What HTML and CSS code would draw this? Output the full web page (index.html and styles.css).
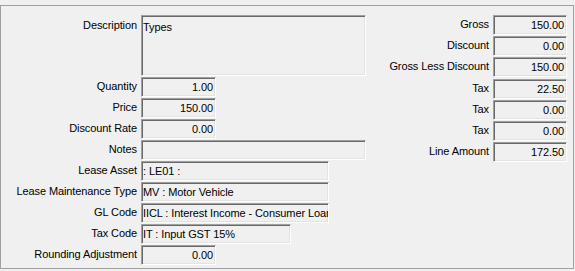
FILE: index.html
```html
<!DOCTYPE html>
<html lang="en">
<head>
    <meta charset="UTF-8">
    <title>Line Details</title>
    <link rel="stylesheet" href="styles.css">
</head>
<body>
    <div class="group">
        <div class="form left-form">
            <span class="lbl lbl-memo">Description</span>
            <div class="fld memo">Types</div>

            <span class="lbl">Quantity</span>
            <div class="fld num">1.00</div>

            <span class="lbl">Price</span>
            <div class="fld num">150.00</div>

            <span class="lbl">Discount Rate</span>
            <div class="fld num">0.00</div>

            <span class="lbl">Notes</span>
            <div class="fld wide"></div>

            <span class="lbl">Lease Asset</span>
            <div class="fld mid">: LE01 :</div>

            <span class="lbl">Lease Maintenance Type</span>
            <div class="fld mid">MV : Motor Vehicle</div>

            <span class="lbl">GL Code</span>
            <div class="fld mid">IICL : Interest Income - Consumer Loan</div>

            <span class="lbl">Tax Code</span>
            <div class="fld short">IT : Input GST 15%</div>

            <span class="lbl">Rounding Adjustment</span>
            <div class="fld num">0.00</div>
        </div>

        <div class="form right-form">
            <span class="lbl">Gross</span>
            <div class="fld num">150.00</div>

            <span class="lbl">Discount</span>
            <div class="fld num">0.00</div>

            <span class="lbl">Gross Less Discount</span>
            <div class="fld num">150.00</div>

            <span class="lbl">Tax</span>
            <div class="fld num">22.50</div>

            <span class="lbl">Tax</span>
            <div class="fld num">0.00</div>

            <span class="lbl">Tax</span>
            <div class="fld num">0.00</div>

            <span class="lbl">Line Amount</span>
            <div class="fld num">172.50</div>
        </div>
    </div>
</body>
</html>
```

FILE: styles.css
```css
body {
    margin: 0;
    background-color: #f0f0f0;
    font-family: "Liberation Sans", Arial, sans-serif;
    font-size: 11px;
    letter-spacing: -0.1px;
    color: #000;
}

/* group box frame */
.group {
    margin-top: 5px;
    width: 574px;
    height: 264px;
    box-sizing: border-box;
    border: 1px solid #a0a0a0;
    display: flex;
    justify-content: space-between;
    align-items: flex-start;
}

.form {
    display: grid;
    column-gap: 4px;
    row-gap: 1px;
    align-items: start;
}

.left-form {
    grid-template-columns: 136px max-content;
    padding-top: 9px;
}

.right-form {
    grid-template-columns: max-content 74px;
    row-gap: 1.2px;
    padding-top: 9px;
    padding-right: 6px;
}

.lbl {
    text-align: right;
    line-height: 18px;
    white-space: nowrap;
}

.lbl-memo {
    padding-top: 1px;
}

/* sunken read-only box */
.fld {
    height: 20px;
    box-sizing: border-box;
    border: 1px solid;
    border-color: #a0a0a0 #fff #fff #a0a0a0;
    box-shadow: inset 1px 1px #696969, inset -1px -1px #e3e3e3;
    padding: 1px 2px 0 1px;
    line-height: 16px;
    white-space: nowrap;
    overflow: hidden;
}

.memo {
    width: 225px;
    height: 61px;
    padding-top: 3px;
}

.num {
    width: 75px;
    text-align: right;
}

.right-form .num {
    width: 74px;
}

.wide {
    width: 225px;
}

.mid {
    width: 188px;
}

.short {
    width: 150px;
}
```
